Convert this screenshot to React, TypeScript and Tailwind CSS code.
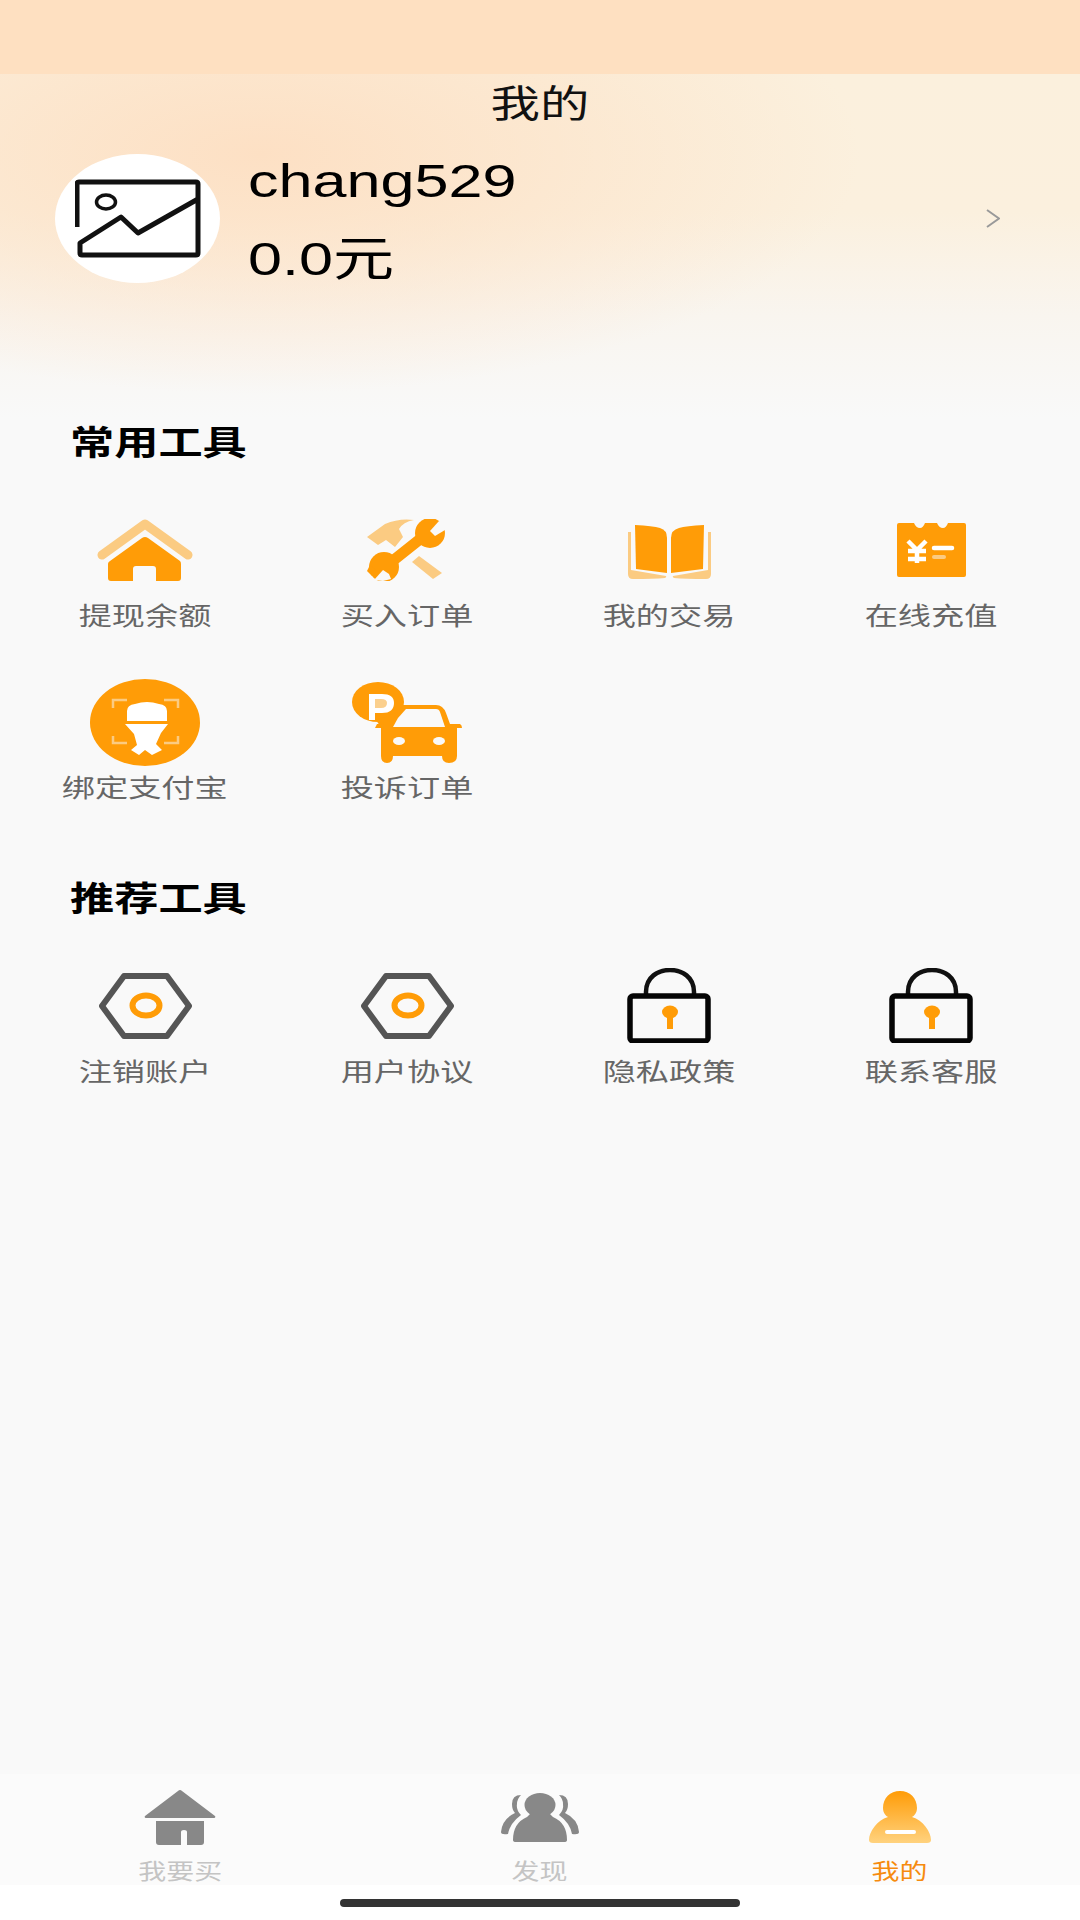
const O = "#ff9c07";
const L = "#fbcb82";
const BG = "#f9f9f9";

function HouseIcon() {
  return (
    <svg width="96" height="62" viewBox="0 0 96 62">
      <path d="M5 36 L48 5 L91 36" fill="none" stroke={L} strokeWidth="9" strokeLinecap="round" strokeLinejoin="round" />
      <path d="M45 19 Q48 17 51 19 L83 42 Q84 43 84 45 L84 59 Q84 62 81 62 L59 62 L59 50 Q59 47 56 47 L39 47 Q36 47 36 50 L36 62 L14 62 Q11 62 11 59 L11 45 Q11 43 13 42 Z" fill={O} />
    </svg>
  );
}

function ToolIcon() {
  return (
    <svg width="80" height="62" viewBox="0 0 80 62">
      <path d="M0 18 L18 5 Q32 -1 47 1 Q36 3 32 10 L36 18 L28 28 L19 21 L11 26 Z" fill={L} />
      <path d="M45 43 L52 37 L75 54 L66 60 Z" fill={L} />
      <path d="M18 48 L62 13" stroke={O} strokeWidth="11" strokeLinecap="round" />
      <circle cx="63" cy="14" r="15" fill={O} />
      <circle cx="17" cy="48" r="15" fill={O} />
      <path d="M63 12 L72 2 L80 4 L78 11 L68 17 Z" fill={BG} />
      <path d="M16 51 L7 61 L16 62 L24 60 L22 55 Z" fill={BG} />
      <path d="M3 46 L0 52 L5 57 L10 52 Z" fill={O} />
    </svg>
  );
}

function BookIcon() {
  return (
    <svg className="mb-[2px]" width="83" height="54" viewBox="0 0 83 54">
      <path d="M0 7 L3 7 L3 45 L38 51 Q39 52 37 53 Q26 54 5 54 Q0 54 0 49 Z" fill={L} />
      <path d="M83 7 L80 7 L80 45 L45 51 Q44 52 46 53 Q57 54 78 54 Q83 54 83 49 Z" fill={L} />
      <path d="M7 0 Q25 1 32 3 Q39 5 39 13 L39 48 L8 44 Z" fill={O} />
      <path d="M76 0 Q58 1 51 3 Q43 5 43 13 L43 48 L75 44 Z" fill={O} />
    </svg>
  );
}

function BillIcon() {
  return (
    <svg className="mb-[4px]" width="69" height="54" viewBox="0 0 69 54">
      <path d="M2 0 L17 0 Q19 5 23 5 Q26 5 28 0 L40 0 Q42 5 46 5 Q49 5 51 0 L67 0 Q69 0 69 2 L69 52 Q69 54 67 54 L2 54 Q0 54 0 52 L0 2 Q0 0 2 0 Z" fill={O} />
      <path d="M11 18 L20 27 L29 18 M11 28 L29 28 M11 36 L29 36 M20 27 L20 40" fill="none" stroke="#fff" strokeWidth="4.5" />
      <path d="M37 25 L55 25" stroke="#fff" strokeWidth="4.5" strokeLinecap="round" />
      <path d="M37 34 L47 34" stroke={L} strokeWidth="4" strokeLinecap="round" />
    </svg>
  );
}

function AlipayIcon() {
  return (
    <svg width="110" height="87" viewBox="0 0 110 87">
      <ellipse cx="55" cy="43.5" rx="55" ry="43.5" fill={O} />
      <path d="M23 29 L23 21 L37 21 M74 21 L88 21 L88 29 M23 57 L23 64 L37 64 M74 64 L88 64 L88 57" fill="none" stroke={L} strokeWidth="2.5" />
      <path d="M37 32 Q37 26 45 25 Q57 21 69 25 Q77 26 77 32 L77 42 L37 42 Z" fill="#fff" />
      <path d="M35 45 L78 45 L71 54 L66 65 L72 71 L62 76 L55 71 L49 76 L41 71 L47 66 L44 55 Z" fill="#fff" />
    </svg>
  );
}

function CarIcon() {
  return (
    <svg className="mb-[3px]" width="110" height="81" viewBox="0 0 110 81">
      <path d="M44 23 L84 23 Q91 23 94 31 L98 42 L108 42 Q110 43 110 46 L105 46 L105 74 Q105 81 97 81 Q90 81 90 74 L41 74 Q41 81 35 81 Q29 81 29 74 L29 46 L23 46 L25 42 L36 42 Z" fill={O} />
      <path d="M54 27 L84 27 Q87 27 88 30 L93 45 L41 45 L46 36 Z" fill={BG} />
      <ellipse cx="47" cy="59" rx="6" ry="4" fill={BG} />
      <ellipse cx="87" cy="59" rx="6" ry="4" fill={BG} />
      <ellipse cx="26" cy="20" rx="26" ry="20" fill={O} />
      <path d="M24 38 L46 30 L37 44 L28 44 Z" fill={O} />
      <path d="M17 38 L17 12 L30 12 Q42 12 42 21 Q42 31 30 31 L23 31 L23 38 Z" fill="#fff" />
      <path d="M23 17 L29 17 Q35 17 35 21 Q35 26 29 26 L23 26 Z" fill="#fbd08e" />
    </svg>
  );
}

function HexIcon() {
  return (
    <svg className="mb-[4px]" width="93" height="66" viewBox="0 0 93 66">
      <path d="M25 3 L68 3 L90 33 L68 63 L25 63 L3 33 Z" fill="none" stroke="#555" strokeWidth="6" strokeLinejoin="round" />
      <ellipse cx="47" cy="32.5" rx="13.5" ry="10" fill="none" stroke={O} strokeWidth="6" />
    </svg>
  );
}

function LockIcon() {
  return (
    <svg width="84" height="75" viewBox="0 0 84 75">
      <path d="M19 29 L19 24 C19 9 31 2 43 2 C55 2 67 9 67 24 L67 29" fill="none" stroke="#111" strokeWidth="4.5" />
      <rect x="3" y="28" width="78" height="45" rx="3" fill="none" stroke="#050505" strokeWidth="5.5" />
      <ellipse cx="43" cy="44" rx="8" ry="6.5" fill={O} />
      <rect x="40" y="46" width="6" height="15" fill={O} />
    </svg>
  );
}

function PhotoIcon() {
  return (
    <svg width="126" height="79" viewBox="0 0 126 79">
      <path d="M2 48 L2 5 Q2 3 4 3 L121 3 Q123 3 123 5 L123 74 Q123 76 121 76 L7 76 Q5 76 5 74 L5 64 L46 38 L63 54 L123 20" fill="none" stroke="#111" strokeWidth="5" strokeLinejoin="round" />
      <ellipse cx="31" cy="23" rx="9.5" ry="7" fill="none" stroke="#111" strokeWidth="3.5" />
    </svg>
  );
}

function NavHome() {
  return (
    <svg width="80" height="56" viewBox="0 0 80 56">
      <path d="M38 1 Q40 -1 42 1 L75 26 Q76 28 74 28 L6 28 Q4 28 5 26 Z" fill="#888" />
      <path d="M16 31 L64 31 L64 52 Q64 55 61 55 L47 55 L47 42 Q47 40 44 40 Q41 40 41 42 L41 55 L19 55 Q16 55 16 52 Z" fill="#888" />
    </svg>
  );
}

function NavPeople() {
  return (
    <svg width="80" height="56" viewBox="0 0 80 56">
      <ellipse cx="40" cy="15" rx="15.5" ry="12" fill="#888" />
      <path d="M30 24 L50 24 L53 27 Q67 33 67 50 Q67 52 64 52 L16 52 Q13 52 13 50 Q13 33 27 27 Z" fill="#888" />
      <path d="M21 5 Q12 5 12 14 Q12 20 15 23 Q2 29 1 42 Q1 45 8 44 Q10 33 21 25 Q16 20 17 14 Q17 9 21 5 Z" fill="#888" />
      <path d="M59 5 Q68 5 68 14 Q68 20 65 23 Q78 29 79 42 Q79 45 72 44 Q70 33 59 25 Q64 20 63 14 Q63 9 59 5 Z" fill="#888" />
    </svg>
  );
}

function NavMe() {
  return (
    <svg width="80" height="56" viewBox="0 0 80 56">
      <defs>
        <linearGradient id="meGrad" x1="0" y1="0" x2="0" y2="1">
          <stop offset="0" stopColor="#ff9c07" />
          <stop offset="1" stopColor="#ffd27e" />
        </linearGradient>
      </defs>
      <path d="M40 1 C50 1 57 8 57 18 C57 23 54 26 52 27 C63 30 71 42 71 50 Q71 53 67 53 L13 53 Q9 53 9 50 C9 42 17 30 28 27 C26 26 23 23 23 18 C23 8 30 1 40 1 Z" fill="url(#meGrad)" />
      <rect x="25" y="40" width="31" height="4" rx="2" fill="#fff" />
    </svg>
  );
}

type Tool = { label: string; icon: React.ReactNode };

function ToolRow({ tools, slot, gap }: { tools: Tool[]; slot: string; gap: string }) {
  return (
    <div className="grid grid-cols-4 pr-[18px] pl-[14px]">
      {tools.map((t) => (
        <div key={t.label} className={`flex flex-col items-center ${gap}`}>
          <div className={`flex items-end justify-center ${slot}`}>{t.icon}</div>
          <span className="h-[34px] origin-center scale-x-[1.3] text-[25.5px] leading-[34px] whitespace-nowrap text-[#666]">{t.label}</span>
        </div>
      ))}
    </div>
  );
}

function SectionTitle({ children }: { children: React.ReactNode }) {
  return (
    <h2 className="ml-[70px] h-[48px] origin-left scale-x-[1.3] text-[34px] leading-[48px] font-bold text-black">{children}</h2>
  );
}

function NavItem({ icon, label, active }: { icon: React.ReactNode; label: string; active?: boolean }) {
  return (
    <div className="flex flex-col items-center pt-[16px]">
      {icon}
      <span className={`mt-[13px] h-[26px] origin-center scale-x-[1.3] text-[21.5px] leading-[26px] whitespace-nowrap ${active ? "text-[#f68b0f]" : "text-[#c4c4c4]"}`}>{label}</span>
    </div>
  );
}

export default function App() {
  return (
    <div
      className="flex h-[1920px] w-[1080px] flex-col overflow-hidden bg-[#f9f9f9]"
      style={{ fontFamily: '"Liberation Sans", "Noto Sans CJK SC", sans-serif' }}
    >
      <div className="h-[74px] shrink-0 bg-[#fee0c1]" />

      <section className="h-[345px] shrink-0 bg-[radial-gradient(ellipse_600px_240px_at_260px_80px,#fde0c4_0%,#fde0c400_100%),linear-gradient(to_bottom,#fbf0dd_0%,#fbf0de_40%,#f9f5ef_70%,#f9f9f9_100%)] pt-[6px]">
        <h1 className="mx-auto h-[48px] w-fit origin-center scale-x-[1.3] text-[38px] leading-[48px] font-normal text-[#111]">我的</h1>
        <div className="mt-[26px] flex h-[129px] items-center pr-[80px] pl-[55px]">
          <div className="flex h-[129px] w-[165px] shrink-0 items-center justify-center rounded-[50%] bg-white">
            <PhotoIcon />
          </div>
          <div className="ml-[28px] flex h-[129px] flex-1 flex-col pt-[1px] text-black">
            <span className="h-[52px] origin-left scale-x-[1.3] text-[47px] leading-[52px]">chang529</span>
            <span className="mt-[26px] h-[50px] origin-left scale-x-[1.3] text-[47px] leading-[52px]">0.0元</span>
          </div>
          <svg width="14" height="19" viewBox="0 0 14 19">
            <path d="M1 1 L13 9.5 L1 18" fill="none" stroke="#999" strokeWidth="2" />
          </svg>
        </div>
      </section>

      <main className="flex-1">
        <SectionTitle>常用工具</SectionTitle>
        <div className="mt-[48px]">
          <ToolRow
            slot="h-[66px]"
            gap="gap-[18px]"
            tools={[
              { label: "提现余额", icon: <HouseIcon /> },
              { label: "买入订单", icon: <ToolIcon /> },
              { label: "我的交易", icon: <BookIcon /> },
              { label: "在线充值", icon: <BillIcon /> },
            ]}
          />
        </div>
        <div className="mt-[46px]">
          <ToolRow
            slot="h-[87px]"
            gap="gap-[5px]"
            tools={[
              { label: "绑定支付宝", icon: <AlipayIcon /> },
              { label: "投诉订单", icon: <CarIcon /> },
            ]}
          />
        </div>
        <div className="mt-[70px]">
          <SectionTitle>推荐工具</SectionTitle>
        </div>
        <div className="mt-[45px]">
          <ToolRow
            slot="h-[75px]"
            gap="gap-[12px]"
            tools={[
              { label: "注销账户", icon: <HexIcon /> },
              { label: "用户协议", icon: <HexIcon /> },
              { label: "隐私政策", icon: <LockIcon /> },
              { label: "联系客服", icon: <LockIcon /> },
            ]}
          />
        </div>
      </main>

      <nav className="grid h-[111px] shrink-0 grid-cols-3 bg-[#fbfbfb]">
        <NavItem icon={<NavHome />} label="我要买" />
        <NavItem icon={<NavPeople />} label="发现" />
        <NavItem icon={<NavMe />} label="我的" active />
      </nav>
      <div className="flex h-[35px] shrink-0 justify-center bg-white pt-[14px]">
        <div className="h-[8px] w-[400px] rounded-full bg-[#333]" />
      </div>
    </div>
  );
}
